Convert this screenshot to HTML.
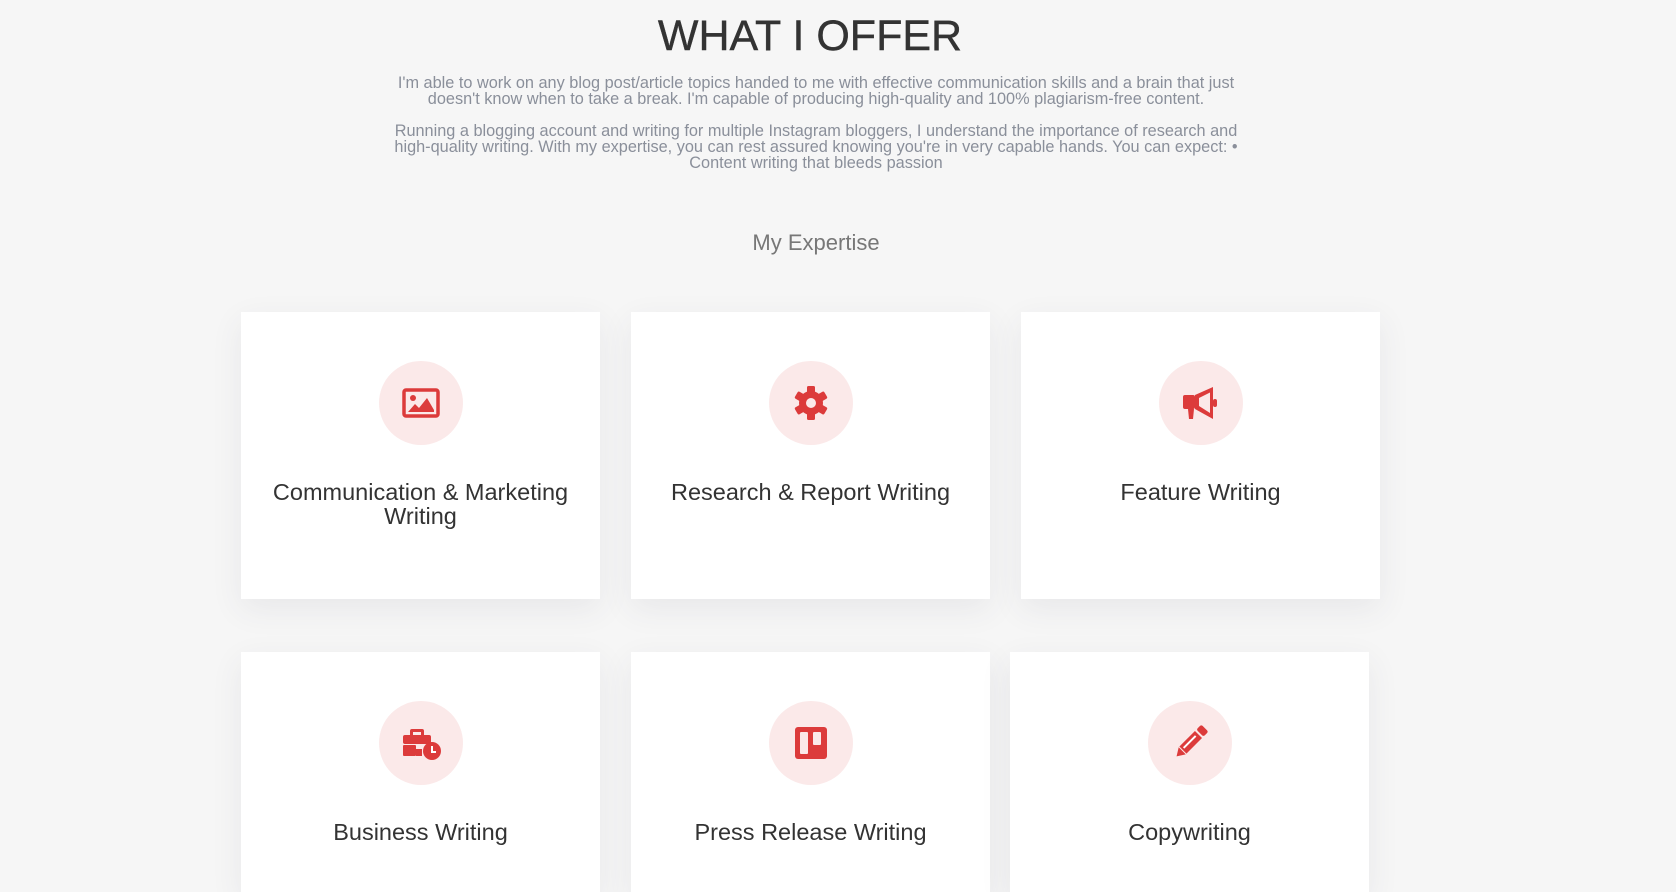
<!DOCTYPE html>
<html><head><meta charset="utf-8"><style>
*{margin:0;padding:0;box-sizing:border-box}
body{width:1676px;height:878px;background:#f6f6f6;font-family:"Liberation Sans",sans-serif;position:relative;overflow:hidden}
h1{position:absolute;left:0;width:1620px;top:12px;text-align:center;font-size:43px;font-weight:normal;color:#333;-webkit-text-stroke:0.4px #333}
.p{position:absolute;left:378px;width:876px;text-align:center;font-size:16.3px;line-height:16px;color:#8a8f9a}
.sub{position:absolute;left:0;width:1632px;top:230px;text-align:center;font-size:22px;color:#777}
.card{position:absolute;background:#fff;width:359px;box-shadow:0 10px 30px rgba(60,70,90,0.08)}
.circ{position:absolute;left:138px;top:49px;width:84px;height:84px;border-radius:50%;background:#fbe9e9;display:flex;align-items:center;justify-content:center}
.t{position:absolute;left:6px;right:6px;top:168px;text-align:center;font-size:23.5px;line-height:24px;color:#333}
svg{display:block}
</style></head><body>
<h1>WHAT I OFFER</h1>
<div class="p" style="top:75px">I'm able to work on any blog post/article topics handed to me with effective communication skills and a brain that just doesn't know when to take a break. I'm capable of producing high-quality and 100% plagiarism-free content.</div>
<div class="p" style="top:123px">Running a blogging account and writing for multiple Instagram bloggers, I understand the importance of research and high&#8209;quality writing. With my expertise, you can rest assured knowing you're in very capable hands. You can expect: •<br>Content writing that bleeds passion</div>
<div class="sub">My Expertise</div>

<div class="card" style="left:241px;top:312px;height:287px">
<div class="circ"><svg width="38" height="30" viewBox="0 0 38 30"><rect x="2" y="2" width="34" height="26" rx="2" fill="none" stroke="#dc3b3b" stroke-width="3.5"/><circle cx="11" cy="10" r="3" fill="#dc3b3b"/><path d="M6 24 L13 16 L17 20 L25 10 L32 22 L32 24 Z" fill="#dc3b3b"/></svg></div>
<div class="t">Communication &amp; Marketing Writing</div></div>

<div class="card" style="left:631px;top:312px;height:287px">
<div class="circ"><svg width="36" height="36" viewBox="0 0 36 36"><g fill="#dc3b3b"><rect x="14" y="1" width="8" height="34" rx="1.5"/><rect x="14" y="1" width="8" height="34" rx="1.5" transform="rotate(60 18 18)"/><rect x="14" y="1" width="8" height="34" rx="1.5" transform="rotate(120 18 18)"/><circle cx="18" cy="18" r="12"/></g><circle cx="18" cy="18" r="5" fill="#fbe9e9"/></svg></div>
<div class="t">Research &amp; Report Writing</div></div>

<div class="card" style="left:1021px;top:312px;height:287px">
<div class="circ"><svg width="42" height="36" viewBox="0 0 42 36"><g fill="#dc3b3b"><rect x="3" y="10" width="12" height="14" rx="2"/><path d="M15 10 L33 2 L33 34 L15 24 Z"/><rect x="33" y="14" width="4" height="8" rx="2"/><path d="M8 24 L14 24 L13 34 L9 34 Z"/></g><path d="M19 13 L30 7.5 L30 28 L19 21 Z" fill="#fbe9e9"/></svg></div>
<div class="t">Feature Writing</div></div>

<div class="card" style="left:241px;top:652px;height:240px">
<div class="circ"><svg width="44" height="36" viewBox="0 0 44 36"><g fill="#dc3b3b"><path d="M13 4 h10 a2 2 0 0 1 2 2 v4 h-3 v-3 h-8 v3 h-3 v-4 a2 2 0 0 1 2-2z"/><rect x="4" y="10" width="28" height="9" rx="2"/><rect x="4" y="20" width="13" height="11" rx="1"/><rect x="17" y="24" width="6" height="7"/><circle cx="33" cy="26" r="9"/></g><path d="M33 21 v6 h4" fill="none" stroke="#fff" stroke-width="2"/></svg></div>
<div class="t">Business Writing</div></div>

<div class="card" style="left:631px;top:652px;height:240px">
<div class="circ"><svg width="34" height="34" viewBox="0 0 34 34"><rect x="1" y="1" width="32" height="32" rx="3" fill="#dc3b3b"/><rect x="6" y="6" width="8" height="22" rx="1" fill="#fbe9e9"/><rect x="19" y="6" width="8" height="13" rx="1" fill="#fbe9e9"/></svg></div>
<div class="t">Press Release Writing</div></div>

<div class="card" style="left:1010px;top:652px;height:240px">
<div class="circ"><svg width="38" height="38" viewBox="0 0 38 38"><g transform="rotate(45 19 19)"><rect x="14" y="-2" width="10" height="7" rx="2" fill="#dc3b3b"/><rect x="14" y="7" width="10" height="22" fill="#dc3b3b"/><path d="M14 30 L24 30 L19 38 Z" fill="#dc3b3b"/><rect x="17" y="10" width="2" height="17" fill="#fff"/></g></svg></div>
<div class="t">Copywriting</div></div>
</body></html>
